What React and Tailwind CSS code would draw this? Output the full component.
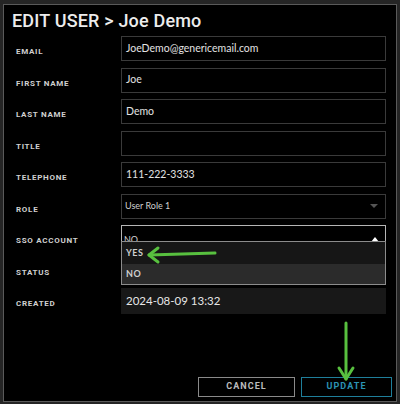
import React from 'react';

const labelCls =
  "w-[105px] shrink-0 pt-[12px] text-[8px] leading-[8px] font-bold tracking-[0.09em] text-[#d0d0d0] font-['Roboto',sans-serif]";
const inputCls =
  "w-[265px] h-[25px] border border-[#3a3a3a] bg-black flex items-center px-[4px] text-[10.5px] text-[#e2e2e2] font-['Lato',sans-serif]";

const Row = ({ label, children }) => (
  <div className="flex items-start h-[25px]">
    <div className={labelCls}>{label}</div>
    {children}
  </div>
);

export default function App() {
  return (
    <div className="relative w-[400px] h-[404px] bg-[#252525] pt-[4px] pl-[3px]">
      <div className="w-[394px] h-[398px] bg-black border border-[#5a5a5a] flex flex-col">
        <h1 className="mt-[4px] pl-[8px] h-[24px] leading-[24px] text-[18px] font-medium tracking-[0.01em] text-[#ececec] font-['Roboto',sans-serif]">
          EDIT USER &gt; Joe Demo
        </h1>

        <div className="mt-[3px] pl-[12px] flex flex-col gap-[6.5px]">
          <Row label="EMAIL">
            <div className={inputCls}>JoeDemo@genericemail.com</div>
          </Row>
          <Row label="FIRST NAME">
            <div className={inputCls}>Joe</div>
          </Row>
          <Row label="LAST NAME">
            <div className={inputCls}>Demo</div>
          </Row>
          <Row label="TITLE">
            <div className={inputCls}></div>
          </Row>
          <Row label="TELEPHONE">
            <div className={inputCls}>111-222-3333</div>
          </Row>
          <Row label="ROLE">
            <div className="w-[265px] h-[25px] border border-[#3a3a3a] flex items-center justify-between px-[3px] text-[9px] text-[#cfcfcf] font-['Lato',sans-serif]">
              <span>User Role 1</span>
              <span className="mr-[4px] w-0 h-0 border-l-[4px] border-r-[4px] border-t-[4px] border-l-transparent border-r-transparent border-t-[#555]" />
            </div>
          </Row>
          <Row label="SSO ACCOUNT">
            <div className="relative w-[265px] h-[25px]">
              <div className="h-[25px] border border-[#b5b5b5] flex items-center justify-between px-[2px] pt-[4px] text-[9px] text-[#d0d0d0] font-['Lato',sans-serif]">
                <span>NO</span>
                <span className="mr-[4px] w-0 h-0 border-l-[4px] border-r-[4px] border-b-[5px] border-l-transparent border-r-transparent border-b-white" />
              </div>
              <div className="absolute left-0 top-[16px] w-[265px] border border-[#8c8c8c] text-[9px] font-bold tracking-[0.05em] text-[#cfcfcf] font-['Lato',sans-serif] z-10">
                <div className="h-[22px] bg-[#161616] flex items-center px-[4px]">YES</div>
                <div className="h-[20px] bg-[#2b2b2b] flex items-center px-[4px]">NO</div>
              </div>
            </div>
          </Row>
          <Row label="STATUS">
            <div className="w-[265px] h-[25px]" />
          </Row>
          <Row label="CREATED">
            <div className="w-[265px] h-[26px] bg-[#181818] flex items-center px-[5px] text-[11.5px] text-[#e6e6e6] font-['Lato',sans-serif]">
              2024-08-09 13:32
            </div>
          </Row>
        </div>

        <div className="mt-auto mb-[4px] pr-[4px] flex justify-end gap-[6px]">
          <button
            type="button"
            className="w-[97px] h-[20px] border border-[#8a8a8a] text-[9px] font-bold tracking-[0.12em] text-[#bcbcbc] font-['Roboto',sans-serif]"
          >
            CANCEL
          </button>
          <button
            type="button"
            className="w-[91px] h-[20px] border border-[#1f7f9b] text-[9px] font-bold tracking-[0.12em] text-[#2b93b3] font-['Roboto',sans-serif]"
          >
            UPDATE
          </button>
        </div>
      </div>

      <svg className="absolute inset-0 pointer-events-none z-20" width="400" height="404" viewBox="0 0 400 404">
        <g stroke="#58c03f" strokeWidth="3" strokeLinecap="round" strokeLinejoin="round" fill="none">
          <path d="M215 253 L149 255" />
          <path d="M158 248 L149 255 L158 262" />
          <path d="M346 323 L346 379" />
          <path d="M339 368 L346 379 L353 368" />
        </g>
      </svg>
    </div>
  );
}
